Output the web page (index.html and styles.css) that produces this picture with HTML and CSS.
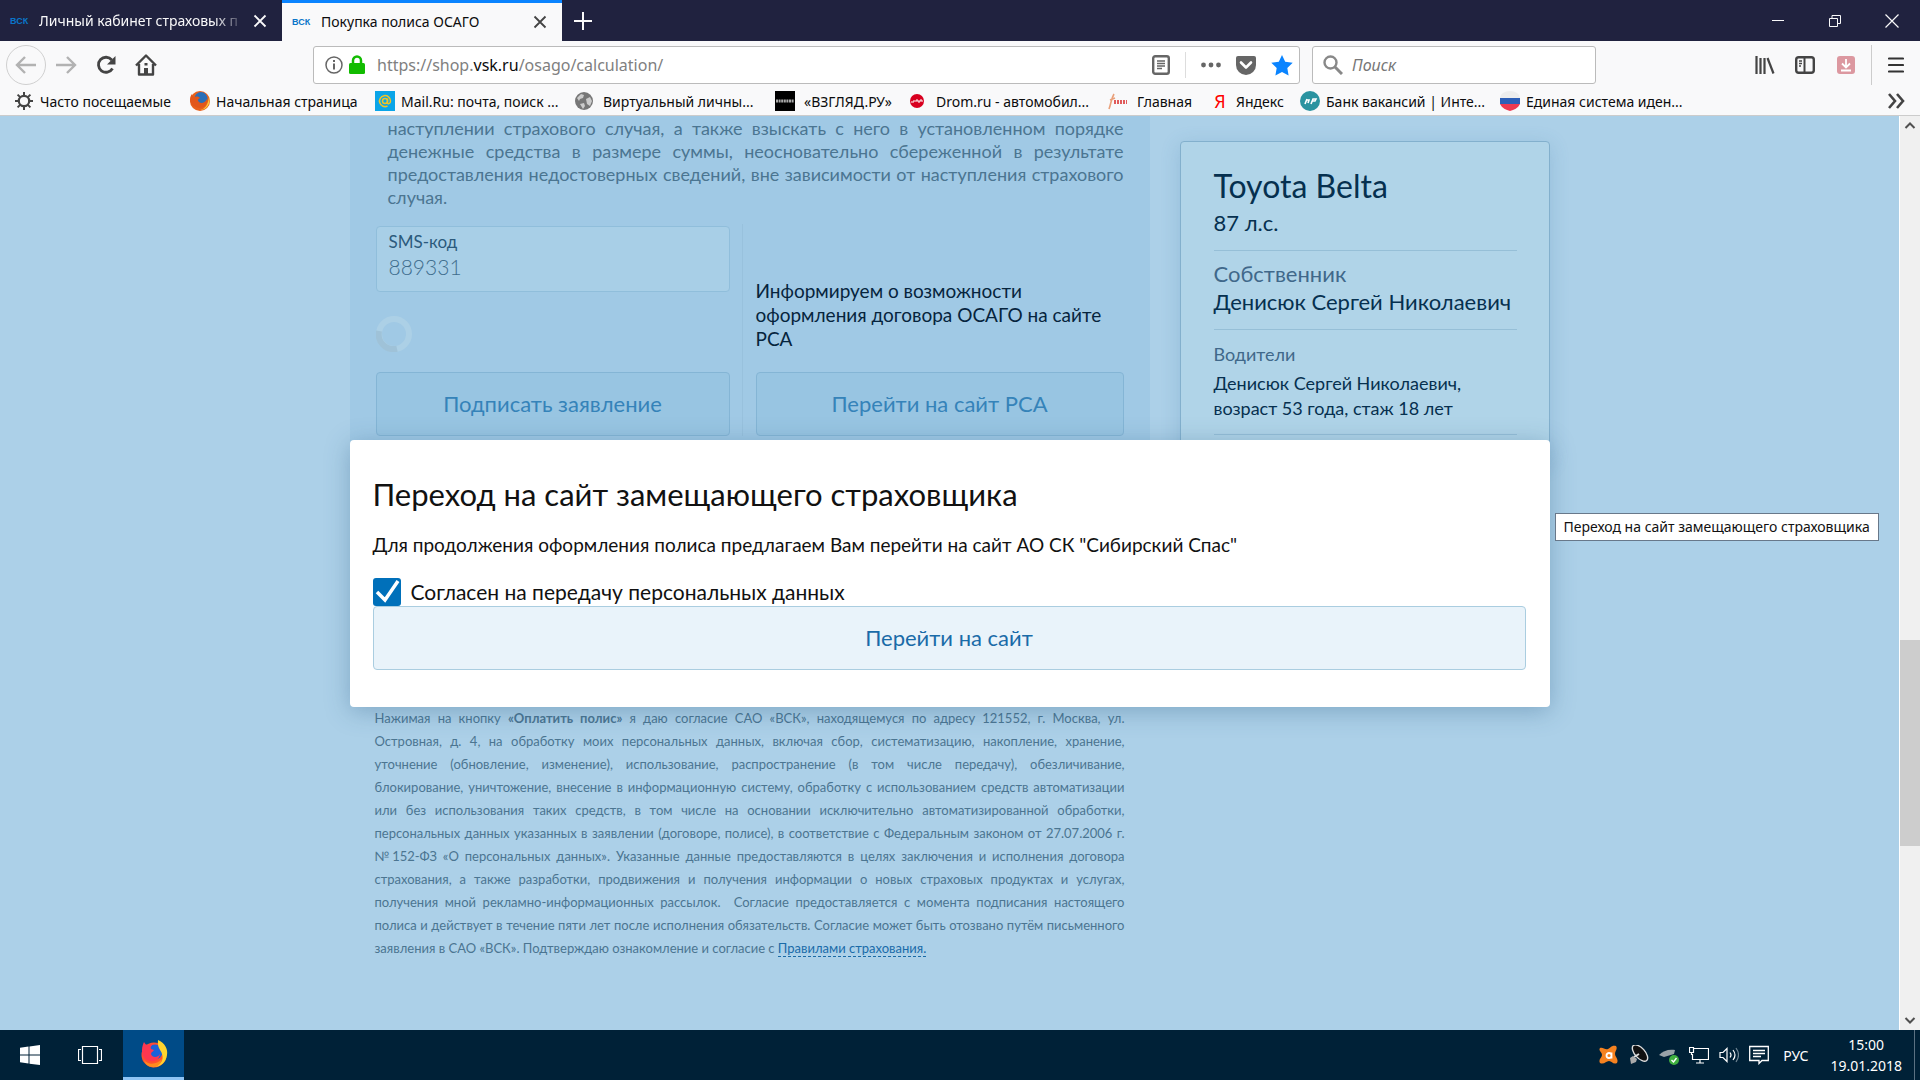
FILE: index.html
```html
<!DOCTYPE html>
<html lang="ru">
<head>
<meta charset="utf-8">
<meta name="viewport" content="width=device-width, initial-scale=1">
<title>Покупка полиса ОСАГО</title>
<link rel="stylesheet" href="styles.css">
</head>
<body>
<header class="chrome">
  <div class="tabs">
    <div class="tab">
      <span class="favicon">ВСК</span>
      <span class="tab-title tab-title-fade">Личный кабинет страховых п</span>
      <button class="icon-btn" aria-label="Закрыть вкладку"><svg width="14" height="14" viewBox="0 0 14 14"><path d="M1.500 1.500l11 11M12.500 1.500l-11 11" stroke="currentColor" stroke-width="1.800" fill="none"/></svg></button>
    </div>
    <div class="tab tab-active">
      <span class="favicon">ВСК</span>
      <span class="tab-title">Покупка полиса ОСАГО</span>
      <button class="icon-btn" aria-label="Закрыть вкладку"><svg width="14" height="14" viewBox="0 0 14 14"><path d="M1.500 1.500l11 11M12.500 1.500l-11 11" stroke="currentColor" stroke-width="1.800" fill="none"/></svg></button>
    </div>
    <button class="icon-btn new-tab" aria-label="Новая вкладка"><svg width="18" height="18" viewBox="0 0 18 18"><path d="M9 0v18M0 9h18" stroke="currentColor" stroke-width="2"/></svg></button>
    <div class="window-controls">
      <button class="icon-btn" aria-label="Свернуть"><svg width="14" height="14" viewBox="0 0 14 14"><path d="M1 6.500h12" stroke="currentColor"/></svg></button>
      <button class="icon-btn" aria-label="Восстановить"><svg width="14" height="14" viewBox="0 0 14 14"><path d="M1.500 4.500h8v8h-8zM4 4.500v-3h8.500v8H10" stroke="currentColor" fill="none"/></svg></button>
      <button class="icon-btn" aria-label="Закрыть"><svg width="14" height="14" viewBox="0 0 14 14"><path d="M.5.5l13 13M13.500.5l-13 13" stroke="currentColor" stroke-width="1.200"/></svg></button>
    </div>
  </div>

  <div class="toolbar">
    <div class="nav-buttons">
      <button class="icon-btn back" aria-label="Назад"><svg width="22" height="20" viewBox="0 0 22 20"><path d="M21 10H2M10 2l-8 8 8 8" stroke="#b2b2b2" stroke-width="2.400" fill="none"/></svg></button>
      <button class="icon-btn" aria-label="Вперёд"><svg width="22" height="20" viewBox="0 0 22 20"><path d="M1 10h19M12 2l8 8-8 8" stroke="#b2b2b2" stroke-width="2.400" fill="none"/></svg></button>
      <button class="icon-btn" aria-label="Обновить"><svg width="20" height="20" viewBox="0 0 20 20"><path d="M16.500 13.500A7.500 7.500 0 1 1 15.800 5" stroke="#444" stroke-width="2.800" fill="none"/><path d="M19.500 1v8.500H11z" fill="#444"/></svg></button>
      <button class="icon-btn" aria-label="Домой"><svg width="22" height="22" viewBox="0 0 22 22"><path d="M1 11.500L11 1.500l10 10M4 10v10.500h14V10" stroke="#444" stroke-width="2.400" fill="none" stroke-linejoin="round"/><path d="M9 20v-6h4v6zM9.500 9h3v2.500h-3z" fill="#444"/></svg></button>
    </div>
    <div class="urlbar">
      <svg width="18" height="18" viewBox="0 0 18 18"><circle cx="9" cy="9" r="8" stroke="#666" stroke-width="1.500" fill="none"/><path d="M9 7.500v6M9 4v2" stroke="#666" stroke-width="2"/></svg>
      <svg width="16" height="20" viewBox="0 0 16 20"><path d="M4 9V5.500a4 4 0 0 1 8 0V9" stroke="#12bc00" stroke-width="2.500" fill="none"/><rect y="8" width="16" height="11" rx="1.500" fill="#12bc00"/></svg>
      <div class="url" role="textbox" contenteditable="true" aria-label="Адрес">https://shop.<b>vsk.ru</b>/osago/calculation/</div>
      <div class="page-actions">
        <button class="icon-btn" aria-label="Режим чтения"><svg width="18" height="20" viewBox="0 0 18 20"><rect x="1.200" y="1.200" width="15.600" height="17.600" rx="2" stroke="#666" stroke-width="2.400" fill="none"/><path d="M5 6h8M5 8.500h8M5 11h8M5 13.500h5" stroke="#666" stroke-width="1.300"/></svg></button>
        <span class="separator"></span>
        <button class="icon-btn" aria-label="Действия"><svg width="20" height="6" viewBox="0 0 20 6"><circle cx="2.500" cy="3" r="2.400" fill="#666"/><circle cx="10" cy="3" r="2.400" fill="#666"/><circle cx="17.500" cy="3" r="2.400" fill="#666"/></svg></button>
        <button class="icon-btn" aria-label="Pocket"><svg width="20" height="19" viewBox="0 0 20 19"><path d="M2 0h16a2 2 0 0 1 2 2v7a10 10 0 0 1-20 0V2a2 2 0 0 1 2-2z" fill="#666"/><path d="M5 6.500l5 5 5-5" stroke="#fff" stroke-width="2.600" fill="none" stroke-linecap="round" stroke-linejoin="round"/></svg></button>
        <button class="icon-btn" aria-label="Закладка"><svg width="22" height="21" viewBox="0 0 22 21"><path d="M11 0l3.200 6.800 7.500 1-5.400 5.200 1.300 7.500L11 17l-6.600 3.500L5.700 13 .3 7.800l7.500-1z" fill="#0a84ff"/></svg></button>
      </div>
    </div>
    <label class="searchbar">
      <svg width="20" height="20" viewBox="0 0 20 20"><circle cx="7.500" cy="7.500" r="6" stroke="#888" stroke-width="2.400" fill="none"/><path d="M12 12l7 7" stroke="#888" stroke-width="3"/></svg>
      <input class="search-input" type="text" placeholder="Поиск" aria-label="Поиск">
    </label>
    <div class="tool-buttons">
      <button class="icon-btn" aria-label="Библиотека"><svg width="20" height="18" viewBox="0 0 20 18"><path d="M1.500 0v18M5.500 2v16M9.500 2v16" stroke="#444" stroke-width="2.200"/><path d="M12.500 2l6 15.500" stroke="#444" stroke-width="2.200"/></svg></button>
      <button class="icon-btn" aria-label="Боковая панель"><svg width="20" height="18" viewBox="0 0 20 18"><rect x="1.200" y="1.200" width="17.600" height="15.600" rx="2.500" stroke="#444" stroke-width="2.400" fill="none"/><path d="M9.500 1v16" stroke="#444" stroke-width="2"/><path d="M4 5h3M4 7.500h3M4 10h2" stroke="#444" stroke-width="1.300"/></svg></button>
      <button class="icon-btn download" aria-label="Загрузки"><svg width="18" height="18" viewBox="0 0 18 18"><rect width="18" height="18" rx="3" fill="#dc98a0"/><path d="M9 3v8M5 7.500l4 4 4-4M4 14.500h10" stroke="#fff" stroke-width="1.800" fill="none"/></svg></button>
      <span class="separator separator-tall"></span>
      <button class="icon-btn" aria-label="Меню"><svg width="16" height="16" viewBox="0 0 16 16"><path d="M1 1.500h14M1 8h14M1 14.500h14" stroke="#333" stroke-width="2.200" stroke-linecap="round"/></svg></button>
    </div>
  </div>

  <nav class="bookmarks">
    <a class="bookmark" href="#"><svg width="20" height="20" viewBox="0 0 20 20"><circle cx="10" cy="10" r="5.200" stroke="#444" stroke-width="2.200" fill="none"/><path d="M10 1v4M10 15v4M1 10h4M15 10h4M3.600 3.600l2.800 2.800M13.600 13.600l2.800 2.800M3.600 16.400l2.800-2.800M13.600 6.400l2.800-2.800" stroke="#444" stroke-width="2"/></svg>Часто посещаемые</a>
    <a class="bookmark" href="#"><svg width="20" height="20" viewBox="0 0 20 20"><circle cx="10" cy="10" r="10" fill="#e8611c"/><circle cx="11" cy="7.500" r="6.500" fill="#2a6fb8"/><path d="M0 9c0-3 1-5 2-6 0 2 1 3 3 3 2-1 4 0 5 1-3 1-2 3-1 4 2 2 6 1 8-3 1 5-3 9-7 9S0 14 0 9z" fill="#e2571b"/><path d="M19 6c2 6-2 13-9 13 5-1 8-5 9-13z" fill="#ffc83a"/></svg>Начальная страница</a>
    <a class="bookmark" href="#"><svg width="20" height="20" viewBox="0 0 20 20"><rect width="20" height="20" fill="#0aa5e8"/><circle cx="10" cy="10" r="2.500" stroke="#f3c324" stroke-width="1.500" fill="none"/><path d="M12.500 7.500v4c0 2 3 1.500 3-1.500a5.500 5.500 0 1 0-3 5" stroke="#f3c324" stroke-width="1.500" fill="none"/></svg>Mail.Ru: почта, поиск ...</a>
    <a class="bookmark bookmark-wide" href="#"><svg width="20" height="20" viewBox="0 0 20 20"><circle cx="10" cy="10" r="9" fill="#777"/><path d="M3 7l4-4 3 1-1 3-3 1-1 2zM12 8l4-2 2 4-2 5-3-2zM6 13l4-1 1 3-2 3z" fill="#ccc"/></svg>Виртуальный личны...</a>
    <a class="bookmark bookmark-wide" href="#"><svg width="20" height="20" viewBox="0 0 20 20"><rect width="20" height="20" fill="#000"/><path d="M1 10h18" stroke="#aaa" stroke-width="3" stroke-dasharray="2 .6"/></svg>«ВЗГЛЯД.РУ»</a>
    <a class="bookmark bookmark-wide" href="#"><svg width="20" height="20" viewBox="0 0 20 20"><circle cx="10" cy="10" r="7" fill="#d8001f"/><path d="M4 11h3v-2M9 11V9h2v2h2V9h2v2" stroke="#fff" fill="none"/></svg>Drom.ru - автомобил...</a>
    <a class="bookmark bookmark-wide" href="#"><svg width="20" height="20" viewBox="0 0 20 20"><path d="M1 18C3 13 3 8 6 3M2 9l5-2" stroke="#e9a07a" stroke-width="1.600" fill="none"/><path d="M6 11h13" stroke="#e05b5b" stroke-width="4" stroke-dasharray="2 1"/></svg>Главная</a>
    <a class="bookmark" href="#"><span class="ya">Я</span>Яндекс</a>
    <a class="bookmark" href="#"><svg width="20" height="20" viewBox="0 0 20 20"><circle cx="10" cy="10" r="10" fill="#2a93a0"/><path d="M5 13l2-5M7 9h2l-1 3M11 13l2-5h3l-1 2h-3" stroke="#fff" stroke-width="1.600" fill="none"/></svg>Банк вакансий | Инте...</a>
    <a class="bookmark" href="#"><svg width="20" height="20" viewBox="0 0 20 20"><path d="M0 7a10 7 0 0 1 20 0z" fill="#eee"/><path d="M0 7h20v6H0z" fill="#2e60b8"/><path d="M0 13h20c-2 4-6 6-10 7-4-1-8-3-10-7z" fill="#ee3a52"/></svg>Единая система иден...</a>
    <button class="icon-btn more" aria-label="Ещё"><svg width="18" height="16" viewBox="0 0 18 16"><path d="M2 1l6 7-6 7M10 1l6 7-6 7" stroke="#444" stroke-width="2.600" fill="none"/></svg></button>
  </nav>
</header>

<main class="viewport">
  <div class="document">
    <div class="layout">
      <div class="main-column">
        <section class="form-panel">
          <p class="terms">наступлении страхового случая, а также взыскать с него в установленном порядке<br>денежные средства в размере суммы, неосновательно сбереженной в результате<br>предоставления недостоверных сведений, вне зависимости от наступления страхового<span class="last-line">случая.</span></p>
          <div class="options">
            <div class="option option-sign">
              <div class="sms-field">
                <label for="sms">SMS-код</label>
                <input id="sms" type="text" value="889331">
              </div>
              <svg class="spinner" width="36" height="36" viewBox="0 0 36 36"><circle cx="18" cy="18" r="15" stroke="#acd0e6" stroke-width="6" fill="none"/><path d="M3 15a15 15 0 0 0 18 17.700" stroke="#9fc2d8" stroke-width="6" fill="none"/></svg>
              <button class="btn btn-muted">Подписать заявление</button>
            </div>
            <div class="option option-rsa">
              <p class="info">Информируем о возможности<br>оформления договора ОСАГО на сайте<br>РСА</p>
              <button class="btn btn-muted">Перейти на сайт РСА</button>
            </div>
          </div>
        </section>
        <p class="consent">Нажимая на кнопку <b>«Оплатить полис»</b> я даю согласие САО «ВСК», находящемуся по адресу 121552, г. Москва, ул.<br>Островная, д. 4, на обработку моих персональных данных, включая сбор, систематизацию, накопление, хранение,<br>уточнение (обновление, изменение), использование, распространение (в том числе передачу), обезличивание,<br>блокирование, уничтожение, внесение в информационную систему, обработку с использованием средств автоматизации<br>или без использования таких средств, в том числе на основании исключительно автоматизированной обработки,<br>персональных данных указанных в заявлении (договоре, полисе), в соответствие с Федеральным законом от 27.07.2006 г.<br>№152-ФЗ «О персональных данных». Указанные данные предоставляются в целях заключения и исполнения договора<br>страхования, а также разработки, продвижения и получения информации о новых страховых продуктах и услугах,<br>получения мной рекламно-информационных рассылок.&nbsp; Согласие предоставляется с момента подписания настоящего<br>полиса и действует в течение пяти лет после исполнения обязательств. Согласие может быть отозвано путём письменного<span class="last-line">заявления в САО «ВСК». Подтверждаю ознакомление и согласие с <a href="#">Правилами страхования.</a></span></p>
      </div>
      <aside class="summary">
        <section class="summary-block">
          <h2>Toyota Belta</h2>
          <p class="lead">87 л.с.</p>
        </section>
        <section class="summary-block">
          <p class="lead muted">Собственник</p>
          <p class="lead">Денисюк Сергей Николаевич</p>
        </section>
        <section class="summary-block drivers">
          <p class="muted">Водители</p>
          <p>Денисюк Сергей Николаевич,<br>возраст 53 года, стаж 18 лет</p>
        </section>
      </aside>
    </div>
    <div class="overlay">
      <div class="modal" role="dialog" aria-labelledby="modal-title">
        <h1 id="modal-title">Переход на сайт замещающего страховщика</h1>
        <p class="modal-text">Для продолжения оформления полиса предлагаем Вам перейти на сайт АО СК "Сибирский Спас"</p>
        <label class="agree">
          <span class="checkbox"><input type="checkbox" checked><svg width="28" height="28" viewBox="0 0 28 28"><path d="M4 14l8 8L25 3" stroke="#fff" stroke-width="3.500" fill="none"/></svg></span>
          Согласен на передачу персональных данных
        </label>
        <button class="btn btn-primary">Перейти на сайт</button>
        <div class="tooltip" role="tooltip">Переход на сайт замещающего страховщика</div>
      </div>
    </div>
  </div>
  <div class="scrollbar">
    <svg width="20" height="20" viewBox="0 0 20 20"><path d="M5.500 12L10 7.500l4.500 4.500" stroke="#505050" stroke-width="2" fill="none"/></svg>
    <div class="track"><div class="thumb"></div></div>
    <svg width="20" height="20" viewBox="0 0 20 20"><path d="M5.500 8l4.500 4.500L14.500 8" stroke="#505050" stroke-width="2" fill="none"/></svg>
  </div>
</main>

<footer class="taskbar">
  <button class="icon-btn task" aria-label="Пуск"><svg width="20" height="20" viewBox="0 0 20 20"><path d="M0 2.800l8.500-1.200v8H0zM9.500 1.400L20 0v9.600H9.500zM0 10.600h8.500v8L0 17.300zM9.500 10.600H20V20L9.500 18.700z" fill="#fff"/></svg></button>
  <button class="icon-btn task" aria-label="Представление задач"><svg width="24" height="20" viewBox="0 0 24 20"><path d="M4.500 1.500h15v17h-15zM3 4.500H.5v11H3M21 4.500h2.500v11H21" stroke="#fff" stroke-width="1.200" fill="none"/></svg></button>
  <button class="icon-btn task task-active" aria-label="Firefox"><svg width="28" height="28" viewBox="0 0 28 28"><circle cx="14" cy="15" r="12.500" fill="#ff4f2e"/><circle cx="15" cy="12" r="7.500" fill="#1b62d8"/><path d="M2 10c0-3 1-6 2-8 1 2 2 3 4 3l6-1c-3 1-4 3-3 5l3 1c-1 2-3 2-3 4 1 4 7 4 9 0-1 7-8 9-13 6-4-2-5-6-5-10z" fill="#ff3750"/><path d="M18 0c7 3 10 9 9 15-1 8-7 12-13 12 7-3 10-7 8-13-1-4-5-6-4-14z" fill="#ffd42e"/><path d="M4 20c5 6 13 4 18-1-1 6-6 9-10 8-4 0-7-3-8-7z" fill="#ff8a1e"/></svg></button>
  <div class="tray">
    <svg width="20" height="20" viewBox="0 0 20 20"><path d="M1 3c3-1 5 2 8 1s3-4 8-3c2 3-1 5-1 8s4 5 2 9c-4 2-5-2-8-2s-5 4-9 2c-2-4 2-5 2-8S-1 6 1 3z" fill="#f58220"/><path d="M12.500 7.500v6M12.500 10.500a2.500 2.500 0 1 1-5 0 2.500 2.500 0 0 1 5 0z" stroke="#fff" stroke-width="1.800" fill="none"/></svg>
    <svg width="20" height="20" viewBox="0 0 20 20"><ellipse cx="11" cy="8" rx="5" ry="10" transform="rotate(-42 11 8)" fill="#111" stroke="#ddd" stroke-width="1.400"/><path d="M10 9l-5 3" stroke="#ddd" stroke-width="2"/><path d="M1 13l3-2 4 3-1 3-5 2z" fill="#aaa"/></svg>
    <svg width="20" height="20" viewBox="0 0 20 20"><path d="M0 10c4-4 9-6 16-5l-1 4-10 3z" fill="#99a2a8"/><circle cx="15" cy="15" r="5" fill="#3faf3f"/><path d="M12.500 15l2 2 3-4" stroke="#fff" stroke-width="1.400" fill="none"/></svg>
    <svg width="20" height="20" viewBox="0 0 20 20"><path d="M5 3.500h14.500v11H3.500V9M11 15v3M7 18h8M.5 2.500h4v5h-4zM2.500 7.500V10" stroke="#fff" stroke-width="1.200" fill="none"/></svg>
    <svg width="20" height="20" viewBox="0 0 20 20"><path d="M1 7.500h3l4-4v13l-4-4H1zM11 7.500q2 2.500 0 5M14 5q4 5 0 10" stroke="#fff" stroke-width="1.200" fill="none"/><path d="M17 3q5 7 0 14" stroke="#6f8593" stroke-width="1.200" fill="none"/></svg>
    <svg width="20" height="20" viewBox="0 0 20 20"><path d="M.7 1.500h18.600v14H13l-3 3v-3H.7zM4 5.500h12M4 8.500h12M4 11.500h8" stroke="#fff" stroke-width="1.300" fill="none"/></svg>
    <span class="lang">РУС</span>
    <div class="clock">15:00<br>19.01.2018</div>
    <span class="show-desktop"></span>
  </div>
</footer>
</body>
</html>
```
FILE: styles.css
```css
* { box-sizing: border-box; }

body {
  margin: 0;
  height: 100vh;
  display: flex;
  flex-direction: column;
  overflow: hidden;
  font-family: "Noto Sans", "Open Sans", sans-serif;
  font-size: 14px;
  color: #0c0c0d;
}

h1, h2, p { margin: 0; font-weight: inherit; }
svg { flex: none; display: block; }
button, input { font: inherit; color: inherit; }

.icon-btn {
  display: flex;
  align-items: center;
  justify-content: center;
  flex: none;
  padding: 0;
  border: 0;
  background: none;
}

/* Browser window */
.chrome { flex: none; background: #f9f9fa; border-bottom: 1px solid #ccc; }

.tabs { display: flex; height: 41px; background: #20223f; color: #f9f9fa; }
.tab {
  display: flex;
  align-items: center;
  gap: 8px;
  width: 282px;
  padding: 0 15px 0 10px;
}
.tab-active { width: 280px; background: #f9f9fa; color: #0c0c0d; border-top: 3px solid #0a84ff; }
.tab-active .icon-btn { color: #444; }
.tab-active .tab-title { padding-bottom: 2px; }
.favicon { width: 21px; color: #0a75c9; font: bold 9px "Liberation Sans", sans-serif; }
.tab-title { flex: 1; min-width: 0; overflow: hidden; white-space: nowrap; }
.tab-title-fade { -webkit-mask-image: linear-gradient(to right, #000 85%, transparent); mask-image: linear-gradient(to right, #000 85%, transparent); }
.new-tab { width: 42px; }
.window-controls { display: flex; margin-left: auto; gap: 43px; padding-right: 21px; }

.toolbar { display: flex; align-items: center; height: 48px; padding: 0 16px 0 6px; }
.nav-buttons { display: flex; align-items: center; gap: 19px; width: 307px; }
.nav-buttons .icon-btn:nth-child(2) { margin-left: -10px; }
.back { width: 40px; height: 40px; border: 1px solid #d0d0d0; border-radius: 50%; }

.urlbar, .searchbar {
  display: flex;
  align-items: center;
  height: 38px;
  border: 1px solid #bbb;
  border-radius: 3px;
  background: #fff;
  font-size: 16px;
}
.urlbar { flex: 1; gap: 6px; padding: 0 6px 0 11px; }
.url { flex: 1; padding-left: 6px; color: #808080; white-space: nowrap; }
.url b { font-weight: 400; color: #0c0c0d; }
.page-actions { display: flex; align-items: center; gap: 15px; }
.separator { width: 1px; height: 26px; background: #ddd; }
.separator-tall { height: 40px; background: #ccc; }

.searchbar { width: 284px; margin: 0 159px 0 12px; padding: 0 10px; gap: 9px; }
.search-input { width: 100%; min-width: 0; padding: 0; border: 0; outline: 0; background: none; }
.search-input::placeholder { color: #777; font-style: italic; opacity: 1; }
.tool-buttons { display: flex; align-items: center; gap: 20px; }
.download { margin-left: 2px; }
.tool-buttons .separator { margin-right: -4px; margin-left: -4px; }

.bookmarks {
  display: grid;
  grid-template-columns: 176px 185px 199px 201px 132px 201px 102px 90px 200px 200px 1fr;
  align-items: center;
  height: 26px;
  padding: 0 15px 2px 14px;
}
.bookmark {
  display: flex;
  align-items: center;
  gap: 6px;
  color: inherit;
  text-decoration: none;
  white-space: nowrap;
}
.bookmark-wide { gap: 9px; }
.ya { width: 20px; color: #f00; font-size: 18px; line-height: 20px; text-align: center; }
.more { justify-self: end; }

/* Web page */
.viewport { flex: 1; display: flex; min-height: 0; }
.document {
  position: relative;
  flex: 1;
  min-width: 0;
  overflow: hidden;
  background: #acd0e8;
  font-family: Lato, "Noto Sans", sans-serif;
  color: #06304f;
}
.layout { display: flex; align-items: flex-start; justify-content: space-between; width: 1200px; max-width: 100%; margin: 0 auto; }
.main-column { width: 800px; }
.form-panel { height: 440px; padding: 1px 26px 0; background: #a0c9e5; }

.terms, .consent { line-height: 23px; text-align: justify; text-align-last: justify; color: #4b7591; white-space: nowrap; }
.terms { padding-left: 12px; font-size: 18px; }
.last-line { display: block; text-align-last: left; }

.options { display: flex; margin-top: 15px; }
.option { display: flex; flex-direction: column; height: 212px; }
.option .btn { margin-top: auto; }
.option-sign { width: 367px; padding: 2px 12px 0 0; border-right: 1px solid #98c1dd; }
.option-rsa { flex: 1; padding-left: 13px; }
.sms-field {
  display: flex;
  flex-direction: column;
  height: 66px;
  padding: 3px 12px;
  border: 1px solid #90bedb;
  border-radius: 4px;
  background: #a8cfe7;
}
.sms-field label { font-size: 17px; line-height: 24px; color: #2b5a7c; }
.sms-field input { padding: 0; border: 0; outline: 0; background: none; color: #3f6d8d; font-size: 21px; font-weight: 300; line-height: 26px; }
.spinner { margin-top: 24px; }
.info { font-size: 19px; line-height: 24px; color: #06243d; margin-top: auto; }
.option .info + .btn { margin-top: 21px; }

.btn {
  width: 100%;
  height: 64px;
  padding: 0 0 1px;
  border: 1px solid #aacde0;
  border-radius: 4px;
  font-size: 22px;
}
.btn-muted { border-color: #84b5d5; background: #98c5e2; color: #3583b9; }
.btn-primary { background: #e9f3fa; color: #1a6ba8; }

.consent { padding: 0 25px; margin-top: 151px; font-size: 13px; }
.consent a { color: #1a6ba8; text-decoration: none; border-bottom: 1px dashed #1a6ba8; }

.summary {
  width: 370px;
  margin-top: 25px;
  padding: 20px 32px 16px 33px;
  border: 1px solid #83b0cd;
  border-radius: 4px;
  background: #b0d4e8;
  box-shadow: 0 4px 20px rgba(50, 110, 160, 0.2);
}
.summary-block { padding-bottom: 13px; margin-bottom: 9px; border-bottom: 1px solid #96bfd7; font-size: 18px; line-height: 25px; }
.summary h2 { font-size: 32px; font-weight: 400; line-height: 47px; }
.lead { font-size: 22px; line-height: 28px; white-space: nowrap; }
.drivers { padding-top: 3px; }
.drivers .muted { margin-bottom: 4px; }
.muted { color: #40688a; }

.overlay { position: absolute; inset: 0; display: flex; align-items: center; justify-content: center; }
.modal {
  position: relative;
  width: 1200px;
  max-width: 100%;
  padding: 34px 24px 37px 23px;
  border-radius: 4px;
  background: #fff;
  color: #111;
  box-shadow: 0 4px 24px rgba(40, 90, 130, 0.35);
}
.modal h1 { font-size: 31px; font-weight: 400; line-height: 40px; }
.modal-text { margin-top: 19px; font-size: 19px; line-height: 24px; }
.agree { display: flex; align-items: center; gap: 10px; margin-top: 21px; font-size: 21px; line-height: 28px; }
.checkbox { position: relative; display: flex; }
.checkbox input { appearance: none; width: 28px; height: 28px; margin: 0; border-radius: 3px; background: #0070ba; }
.checkbox svg { position: absolute; inset: 0; }
.modal .btn { display: block; }
.tooltip {
  position: absolute;
  left: calc(100% + 5px);
  top: 73px;
  padding: 0 8px;
  border: 1px solid #68788a;
  background: #fff;
  color: #111;
  font: 15px/26px "Noto Sans", sans-serif;
  font-size: 14px;
  white-space: nowrap;
}

.scrollbar { display: flex; flex-direction: column; width: 21px; border-left: 1px solid #fff; background: #f0f0f0; }
.track { flex: 1; display: flex; flex-direction: column; justify-content: flex-end; padding-bottom: 164px; }
.thumb { height: 206px; background: #cdcdcd; }

/* Taskbar */
.taskbar { flex: none; display: flex; height: 50px; background: #002137; color: #fff; }
.task { width: 60px; }
.task-active { width: 61px; margin-left: 3px; background: #004b87; border-bottom: 3px solid #8fc4f4; }
.tray { display: flex; align-items: center; gap: 10px; margin-left: auto; }
.lang { margin-left: 4px; }
.clock { margin-left: 12px; margin-right: 2px; text-align: center; line-height: 21px; }
.show-desktop { align-self: stretch; width: 6px; border-left: 1px solid #5b7182; }
```
